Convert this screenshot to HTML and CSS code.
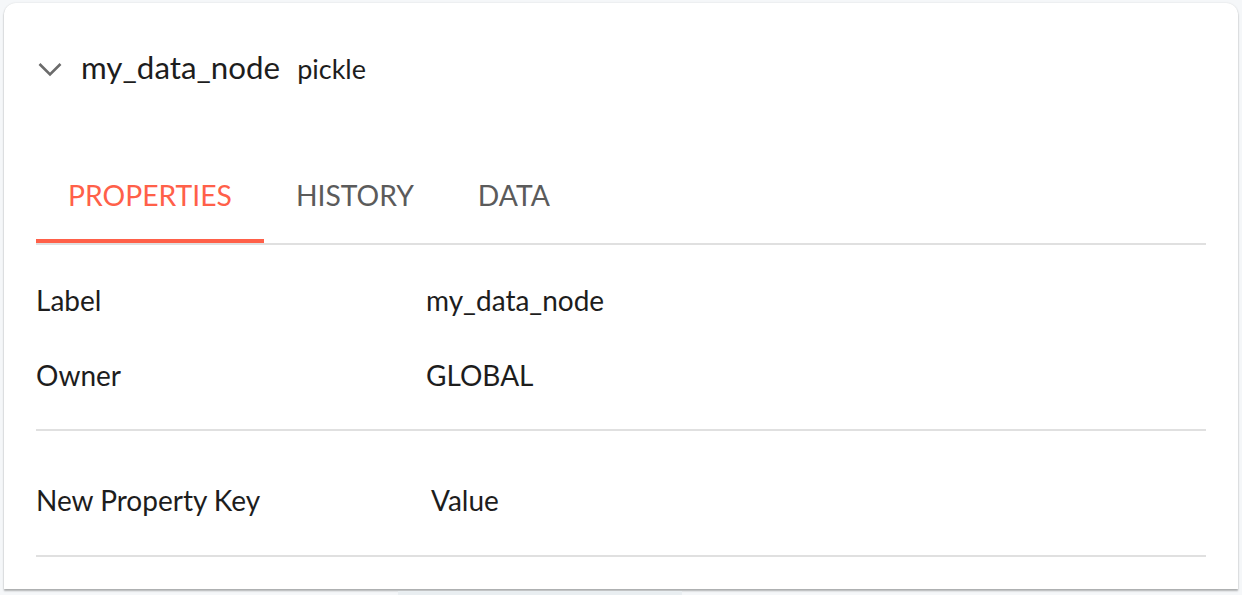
FILE: index.html
```html
<!DOCTYPE html>
<html>
<head>
<meta charset="utf-8">
<link rel="stylesheet" href="styles.css">
</head>
<body>
<div class="card">
  <div class="header">
    <svg class="chevron" width="24" height="24" viewBox="0 0 24 24"><path d="M1.5 6 L12 16.5 L22.5 6" fill="none" stroke="#6b6b6b" stroke-width="2.6"/></svg>
    <span class="title">my_data_node</span>
    <span class="subtitle">pickle</span>
  </div>
  <div class="tabs">
    <div class="tab active">PROPERTIES</div>
    <div class="tab">HISTORY</div>
    <div class="tab">DATA</div>
  </div>
  <div class="rows">
    <div class="row"><span class="key">Label</span><span class="val">my_data_node</span></div>
    <div class="row"><span class="key">Owner</span><span class="val">GLOBAL</span></div>
  </div>
  <div class="newrow">
    <span class="key">New Property Key</span><span class="val val-new">Value</span>
  </div>
</div>
<div class="peek"></div>
</body>
</html>
```
FILE: styles.css
```css
html, body { margin: 0; padding: 0; }
body {
  background: #f5f7f9;
  font-family: Lato, "Open Sans", sans-serif;
  color: #1d1d1d;
  padding: 3px 4px 0 4px;
  height: 595px;
  box-sizing: border-box;
  overflow: hidden;
  position: relative;
}
.card {
  background: #fff;
  border-radius: 12px 12px 0 0;
  box-shadow: 0 2px 2px rgba(0,0,0,0.28), 0 0 2px rgba(0,0,0,0.12);
  height: 586px;
  box-sizing: border-box;
  padding: 0 32px;
}
.header {
  display: flex;
  align-items: baseline;
  height: 120px;
  padding-top: 45px;
  box-sizing: border-box;
}
.chevron { align-self: flex-start; margin: 10px 19px 0 2px; }
.title { font-size: 31.3px; line-height: 38px; }
.subtitle { font-size: 27px; margin-left: 17px; }
.tabs {
  display: flex;
  margin-top: 38px;
  border-bottom: 2px solid #e0e0e0;
}
.tab {
  font-size: 28.3px;
  color: #5b5b5b;
  padding: 17px 32px 27px;
  line-height: 34px;
  border-bottom: 4px solid transparent;
}
.tab.active { color: #ff6049; border-bottom-color: #ff6049; }
.rows {
  padding: 38px 0 37px;
  border-bottom: 2px solid #e0e0e0;
}
.row { display: flex; font-size: 28px; line-height: 34px; }
.row + .row { margin-top: 41px; }
.key { width: 390px; }
.newrow {
  display: flex;
  font-size: 28px;
  line-height: 34px;
  padding: 52px 0 38px;
  border-bottom: 2px solid #e0e0e0;
}
.val-new { margin-left: 5px; }
.peek {
  position: absolute;
  left: 398px; bottom: 0;
  width: 284px; height: 4px;
  background: #e9eef1;
}
```
